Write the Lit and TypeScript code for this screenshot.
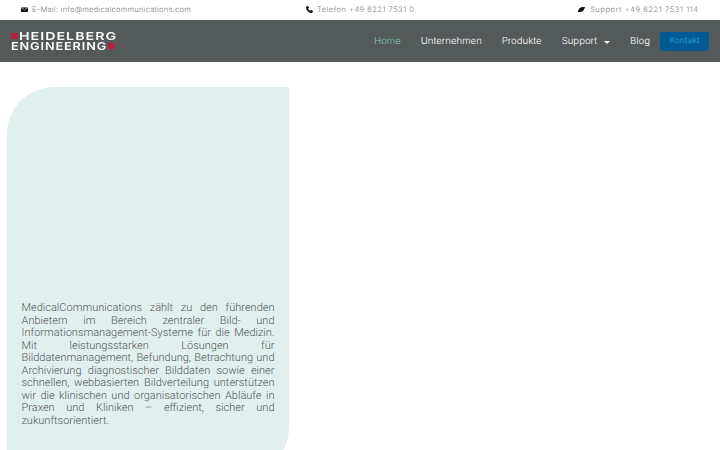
import { LitElement, html, css } from "lit";
import { customElement } from "lit/decorators.js";

@customElement("app-root")
export class AppRoot extends LitElement {
  static styles = css`
    :host { display: block; width: 720px; height: 450px; overflow: hidden; background: #fff; text-rendering: geometricPrecision; }
    .top { height: 20px; display: grid; grid-template-columns: 285px 272px 1fr; align-items: center; padding: 0 0 1px 21px; box-sizing: border-box;
      font: 300 7.5px/18px "Inter", sans-serif; letter-spacing: .5px; color: #74777a; background: #fff; }
    .item { display: flex; align-items: center; gap: 4px; white-space: nowrap; }
    .item svg { width: 7px; height: 7px; fill: #111; flex: none; }
    .mail { letter-spacing: .27px; }
    .sup { gap: 5px; letter-spacing: .6px; }
    .nav { height: 42px; background: #54595a; display: flex; align-items: center; justify-content: space-between; padding: 0 11px; }
    .logo { display: flex; flex-direction: column; gap: 0; font: 600 11px/10px "Inter", sans-serif; color: #fff; width: 107px; letter-spacing: .8px; }
    .line { display: flex; align-items: center; height: 10px; white-space: nowrap; }
    .logo i { width: 7px; height: 6px; background: #b5213f; filter: blur(.6px); flex: none; }
    .w1 { display: block; margin-left: 1px; transform: scaleX(1.29); transform-origin: left center; }
    .w2 { display: block; width: 97px; transform: scaleX(1.15); transform-origin: left center; }
    .menu { display: flex; align-items: center; gap: 20px; font: 300 9.6px/1 "Inter", sans-serif; color: #fff; }
    .menu a { display: flex; align-items: center; gap: 7px; padding-top: 2px; }
    .menu a.home { color: #7fcbb3; }
    .caret { width: 0; height: 0; border: 3px solid transparent; border-top: 3px solid #f2f2f2; border-bottom: 0; }
    .menu a.kontakt { margin-left: -10px; padding: 0; width: 49px; height: 19px; border-radius: 3px; background: #015a92; color: #2a9bd3; font-size: 8.3px; font-weight: 400; justify-content: center; }
    main { padding: 25px 0 0 7px; }
    .panel { width: 282px; height: 386px; box-sizing: border-box; background: #e0f0ee; border-radius: 47px 0 45px 0; padding: 215px 14.5px 0 14.5px; }
    p { margin: 0; font: 300 11px/12.5px "Roboto", sans-serif; color: #54595a; text-align: justify; }
  `;

  render() {
    return html`
      <div class="top">
        <div class="item mail"><svg viewBox="0 0 10 10"><path d="M0 2h10v6.5H0z"/><path d="M0 2l5 3.5L10 2" fill="none" stroke="#fff" stroke-width=".8"/></svg>E-Mail: info@medicalcommunications.com</div>
        <div class="item"><svg viewBox="0 0 10 10"><path d="M1 .5l2-.5 1.3 2.6L3 3.6c.5 1.4 1.800 2.700 3.300 3.300l1-1.300L10 7l-.5 2c-.2.700-.8 1-1.500 1C3.800 9.800.2 6.200 0 2 0 1.300.4.700 1 .5z"/></svg>Telefon +49 6221 7531 0</div>
        <div class="item sup"><svg viewBox="0 0 10 10"><path d="M0 7.500C.5 5 3 1.800 6 1.500h4C9.500 4.500 7.500 7.800 4 8.500H0z"/></svg>Support +49 6221 7531 114</div>
      </div>
      <div class="nav">
        <div class="logo">
          <div class="line"><i></i><span class="w1">HEIDELBERG</span></div>
          <div class="line"><span class="w2">ENGINEERING</span><i></i></div>
        </div>
        <div class="menu">
          <a class="home">Home</a>
          <a>Unternehmen</a>
          <a>Produkte</a>
          <a>Support <span class="caret"></span></a>
          <a>Blog</a>
          <a class="kontakt">Kontakt</a>
        </div>
      </div>
      <main>
        <div class="panel">
          <p>MedicalCommunications zählt zu den führenden Anbietern im Bereich zentraler Bild- und Informationsmanagement-Systeme für die Medizin. Mit leistungsstarken Lösungen für Bilddatenmanagement, Befundung, Betrachtung und Archivierung diagnostischer Bilddaten sowie einer schnellen, webbasierten Bildverteilung unterstützen wir die klinischen und organisatorischen Abläufe in Praxen und Kliniken – effizient, sicher und zukunftsorientiert.</p>
        </div>
      </main>
    `;
  }
}
